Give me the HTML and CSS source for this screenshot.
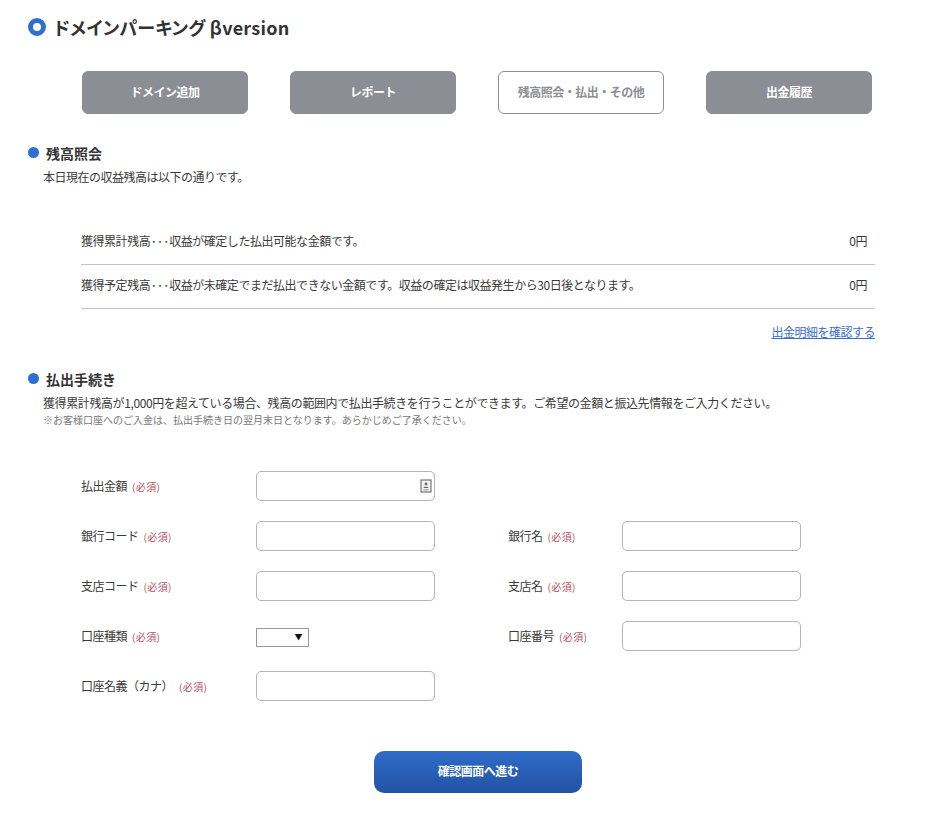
FILE: index.html
```html
<!DOCTYPE html>
<html lang="ja">
<head>
<meta charset="utf-8">
<title>ドメインパーキング βversion</title>
<link rel="stylesheet" href="styles.css">
</head>
<body>
<main class="page">
  <h1 class="page-title"><span class="ring"></span>ドメインパーキング βversion</h1>
  <nav class="tabs">
    <a class="tab">ドメイン追加</a>
    <a class="tab">レポート</a>
    <a class="tab tab-active">残高照会・払出・その他</a>
    <a class="tab">出金履歴</a>
  </nav>

  <section class="balance">
    <h2 class="heading"><span class="dot"></span>残高照会</h2>
    <p class="lead">本日現在の収益残高は以下の通りです。</p>
    <div class="rows">
      <div class="row"><span>獲得累計残高<span class="dots">・・・</span>収益が確定した払出可能な金額です。</span><span>0円</span></div>
      <div class="row"><span>獲得予定残高<span class="dots">・・・</span>収益が未確定でまだ払出できない金額です。収益の確定は収益発生から30日後となります。</span><span>0円</span></div>
    </div>
    <div class="link-line"><a class="link">出金明細を確認する</a></div>
  </section>

  <section class="payout">
    <h2 class="heading"><span class="dot"></span>払出手続き</h2>
    <p class="lead">獲得累計残高が1,000円を超えている場合、残高の範囲内で払出手続きを行うことができます。ご希望の金額と振込先情報をご入力ください。</p>
    <p class="note">※お客様口座へのご入金は、払出手続き日の翌月末日となります。あらかじめご了承ください。</p>
    <form class="form">
      <label class="label">払出金額<em>(必須)</em></label>
      <div class="field">
        <input class="input" type="text">
        <svg class="autofill" width="12" height="14" viewBox="0 0 12 14" aria-hidden="true">
          <rect x="1" y="1" width="10" height="12" fill="#f1f1f1" stroke="#777" stroke-width="1.2"/>
          <circle cx="6" cy="5" r="1.4" fill="#666"/>
          <path d="M3.5 9 C3.5 7.4 8.5 7.4 8.5 9 Z" fill="#666"/>
          <path d="M3.5 10.8 H8.5" stroke="#999" stroke-width="1"/>
        </svg>
      </div>

      <label class="label first">銀行コード<em>(必須)</em></label>
      <input class="input" type="text">
      <label class="label second">銀行名<em>(必須)</em></label>
      <input class="input" type="text">

      <label class="label first">支店コード<em>(必須)</em></label>
      <input class="input" type="text">
      <label class="label second">支店名<em>(必須)</em></label>
      <input class="input" type="text">

      <label class="label first">口座種類<em>(必須)</em></label>
      <div class="select"><span class="arrow">▼</span></div>
      <label class="label second">口座番号<em>(必須)</em></label>
      <input class="input" type="text">

      <label class="label first">口座名義（カナ）<em class="wide">(必須)</em></label>
      <input class="input" type="text">
    </form>
    <div class="submit-line"><button class="submit" type="button">確認画面へ進む</button></div>
  </section>
</main>
</body>
</html>
```
FILE: styles.css
```css
* { box-sizing: border-box; }
html, body { margin: 0; background: #fff; }
body {
  font-family: "Noto Sans CJK JP", "Noto Sans", sans-serif;
  color: #3a3a3a;
  font-size: 12px;
  letter-spacing: -0.5px;
}
.page { width: 933px; height: 830px; padding: 14px 58px 0 28px; overflow: hidden; }
.page-title {
  display: flex; align-items: center; gap: 8px;
  margin: 0; height: 26px;
  font-size: 18px; font-weight: 700; line-height: 26px; color: #333;
  font-feature-settings: "palt"; letter-spacing: 0.26px;
}
.ring {
  width: 18px; height: 18px; border-radius: 50%;
  border: 5px solid #2f6fd0; background: #fff; flex: none;
}
.tabs { display: flex; gap: 42px; margin: 31px 0 0 54px; }
.tab {
  width: 166px; height: 43px; border-radius: 6px; padding-bottom: 2px;
  display: flex; align-items: center; justify-content: center;
  background: #8b8e94; color: #fff; font-size: 12px; font-weight: 700;
  border: 1px solid #8b8e94;
}
.tab-active { background: #fff; color: #8b8e94; }
.heading {
  display: flex; align-items: center; gap: 7px;
  margin: 0; height: 20px;
  font-size: 14px; font-weight: 700; line-height: 20px; color: #333;
  letter-spacing: 0;
}
.dot { width: 11px; height: 11px; border-radius: 50%; background: #2f6fd0; flex: none; margin-top: -1px; }
.lead { margin: 5px 0 0 15px; line-height: 18px; font-size: 12px; }
.balance { margin-top: 29px; }
.rows { margin: 35px 0 0 53px; width: 794px; }
.row {
  display: flex; justify-content: space-between;
  height: 44px; padding: 0 8px 0 0; line-height: 39px;
  border-bottom: 1px solid #c4c4c4;
  letter-spacing: -0.46px;
}
.dots { font-size: 7px; font-weight: 700; letter-spacing: -0.7px; line-height: 1; vertical-align: 2px; }
.link-line { margin-top: 14px; text-align: right; width: 847px; line-height: 18px; }
.link { color: #3b6fc4; text-decoration: underline; }
.payout { margin-top: 28px; }
.payout .lead { margin-top: 5px; letter-spacing: -0.4px; }
.note { margin: 1px 0 0 15px; font-size: 10px; line-height: 14px; color: #777; letter-spacing: 0; }
.form {
  display: grid;
  grid-template-columns: 175px 179px 73px 114px 179px;
  grid-auto-rows: 30px; row-gap: 20px; align-items: center;
  margin: 44px 0 0 53px;
}
.label.first { grid-column: 1; }
.label.second { grid-column: 4; }
.form > .input:last-child { grid-column: 2; }
.label { font-size: 12px; padding-bottom: 2px; }
.label em { font-style: normal; font-size: 10px; color: #b5505a; margin-left: 5px; letter-spacing: 0.4px; }
.label em.wide { margin-left: 6px; }
.field { position: relative; height: 30px; }
.input {
  display: block; width: 179px; height: 30px; padding: 0 8px;
  border: 1px solid #b5b5b5; border-radius: 5px; background: #fff;
}
.autofill { position: absolute; right: 3px; top: 8px; }
.select {
  width: 53px; height: 19px; margin-top: 2px; border: 1px solid #999; background: #fff;
  display: flex; align-items: center; justify-content: flex-end; padding-right: 6px;
}
.arrow { font-size: 8px; line-height: 1; color: #111; }
.submit-line { display: flex; margin: 50px 0 0 346px; }
.submit {
  width: 208px; height: 42px; border: 0; border-radius: 10px; padding: 0 0 3px;
  background: linear-gradient(#2e6cc9, #2352a3);
  color: #fff; font: 700 12px "Noto Sans CJK JP", sans-serif; letter-spacing: -0.5px;
}
```
